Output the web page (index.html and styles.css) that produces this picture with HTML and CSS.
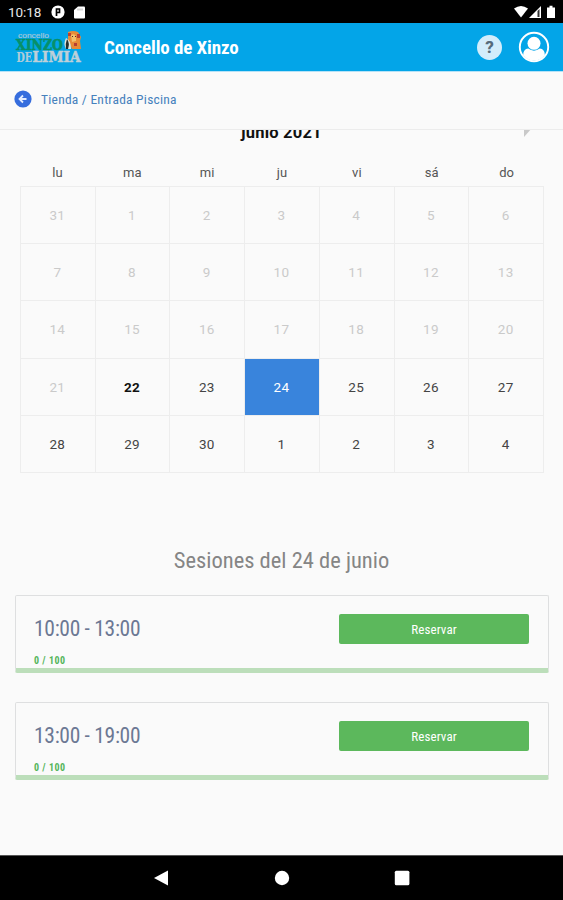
FILE: index.html
```html
<!DOCTYPE html>
<html lang="es">
<head>
<meta charset="utf-8">
<title>Concello de Xinzo</title>
<link rel="stylesheet" href="styles.css">
</head>
<body>
<div class="status">
  <span class="clock">10:18</span>
  <svg class="ic-app" width="14" height="14" viewBox="0 0 14 14"><circle cx="7" cy="7" r="6.600" fill="#fff"/><path d="M5.500 11V4h3v3.500h-3" fill="none" stroke="#000" stroke-width="1.700"/></svg>
  <svg class="ic-sd" width="11" height="13" viewBox="0 0 11 13"><path d="M4 .5h6q1 0 1 1v10q0 1-1 1H1q-1 0-1-1V4z" fill="#fff"/><path d="M4 2.500v2M6 2.500v2M8 2.500v2" stroke="#999" stroke-width=".8"/></svg>
  <span class="grow"></span>
  <svg width="44" height="14" viewBox="0 0 44 14"><path d="M1 3.500Q8-1.500 15 3.500L8 12.500z" fill="#fff"/><path d="M16 13 28 1v12z" fill="#fff"/><path d="M24.500 6v6h2V4z" fill="#333"/><path d="M34 2.500h2.500V.8h3v1.700H42V13h-8z" fill="#fff"/></svg>
</div>
<header class="header">
  <svg class="logo" width="68" height="34" viewBox="0 0 68 34">
    <text x="3" y="7" font-size="8" textLength="31" lengthAdjust="spacingAndGlyphs" fill="#a3c6d6" stroke="#a3c6d6" stroke-width=".2" font-family="Liberation Sans, sans-serif">concello</text>
    <g font-family="DejaVu Serif, serif" font-weight="bold">
      <text x="1" y="19" font-size="15" textLength="47" lengthAdjust="spacingAndGlyphs" fill="#079068" stroke="#079068" stroke-width=".6">XINZO</text>
      <text x="1.500" y="31" font-size="12" textLength="15.500" lengthAdjust="spacingAndGlyphs" fill="#b2cdd8" stroke="#b2cdd8" stroke-width=".2">DE</text>
      <text x="17.500" y="31" font-size="14.500" textLength="48" lengthAdjust="spacingAndGlyphs" fill="#bed0d8" stroke="#bed0d8" stroke-width=".5">LIMIA</text>
    </g>
    <path d="M53 1q5-2 10 0l3 5-1 4 1 8h-9l-4-8z" fill="#e88b36"/>
    <path d="M53 2h3v3h-3zM62 3h3v4h-3zM59 12h3v3h-3z" fill="#b83e32"/>
    <path d="M56 4q3-2 5 1v5l-4 1z" fill="#f3c16b"/>
    <path d="M57 5h1v1h-1zM60 5h1v1h-1z" fill="#562d28"/>
    <path d="M51 7q5 2 5 11h-5q-3-5 0-11z" fill="#e2e8de"/>
    <path d="M52 8q3 4 1 10h-2q-1-5 1-10z" fill="#26302f"/>
  </svg>
  <h1>Concello de Xinzo</h1>
  <span class="grow"></span>
  <span class="help">?</span>
  <svg class="user" width="32" height="32" viewBox="0 0 32 32"><circle cx="16" cy="16" r="14.200" fill="none" stroke="#fff" stroke-width="1.900"/><circle cx="16" cy="12.300" r="6.500" fill="#fff"/><path d="M5.200 24q0-6 5-6.500 5.800 4.300 11.600 0 5 .5 5 6.500-4 5.500-10.800 5.500T5.200 24z" fill="#fff"/></svg>
</header>
<nav class="crumbs">
  <svg width="18" height="18" viewBox="0 0 18 18"><circle cx="9" cy="9" r="8.600" fill="#366ddd"/><path d="M9 5.500 5.500 9 9 12.500M6 9h6.500" fill="none" stroke="#e4edff" stroke-width="1.800"/></svg>
  <a>Tienda / Entrada Piscina</a>
</nav>
<main class="content">
  <div class="month"><span>junio 2021</span><i class="next"></i></div>
  <div class="week"><span>lu</span><span>ma</span><span>mi</span><span>ju</span><span>vi</span><span>sá</span><span>do</span></div>
  <div class="days">
    <b class="off">31</b><b class="off">1</b><b class="off">2</b><b class="off">3</b><b class="off">4</b><b class="off">5</b><b class="off">6</b>
    <b class="off">7</b><b class="off">8</b><b class="off">9</b><b class="off">10</b><b class="off">11</b><b class="off">12</b><b class="off">13</b>
    <b class="off">14</b><b class="off">15</b><b class="off">16</b><b class="off">17</b><b class="off">18</b><b class="off">19</b><b class="off">20</b>
    <b class="off">21</b><b class="today">22</b><b>23</b><b class="selected">24</b><b>25</b><b>26</b><b>27</b>
    <b>28</b><b>29</b><b>30</b><b>1</b><b>2</b><b>3</b><b>4</b>
  </div>
  <h2>Sesiones del 24 de junio</h2>
  <section class="session">
    <div class="row"><span class="time">10:00 - 13:00</span><button>Reservar</button></div>
    <div class="count">0 / 100</div>
  </section>
  <section class="session">
    <div class="row"><span class="time">13:00 - 19:00</span><button>Reservar</button></div>
    <div class="count">0 / 100</div>
  </section>
</main>
<footer class="navbar">
  <svg width="16" height="18" viewBox="0 0 16 18"><path d="M0 9 14 1.500v15z" fill="#fff"/></svg>
  <svg width="16" height="18" viewBox="0 0 16 18"><circle cx="8" cy="9" r="7.200" fill="#fff"/></svg>
  <svg width="16" height="18" viewBox="0 0 16 18"><rect x=".8" y="1.700" width="14.600" height="14.600" rx="1.500" fill="#fff"/></svg>
</footer>
</body>
</html>
```
FILE: styles.css
```css
* { box-sizing: border-box; }
body {
  margin: 0;
  height: 900px;
  display: flex;
  flex-direction: column;
  overflow: hidden;
  background: #fafafa;
  font-family: Roboto, "Liberation Sans", sans-serif;
}
.grow { flex: 1; }
.status {
  height: 23px;
  flex: none;
  display: flex;
  align-items: center;
  padding: 1px 6px 0 8px;
  background: #000;
  color: #e8e8e8;
}
.clock { width: 43px; font-size: 13.5px; letter-spacing: -.1px; }
.ic-sd { margin-left: 9px; }
.header {
  height: 49px;
  flex: none;
  display: flex;
  align-items: center;
  padding: 0 13px 0 15px;
  background: #03a5e8;
  border-bottom: 1px solid #b5e2f7;
}
.logo { margin-top: 2px; }
h1 {
  margin: 0 0 0 21px;
  color: #fff;
  font-size: 19px;
  font-weight: 700;
  font-stretch: 75%;
  letter-spacing: -.1px;
  white-space: nowrap;
}
.help {
  width: 25px;
  height: 25px;
  margin-right: 16px;
  border-radius: 50%;
  background: #d3edfb;
  color: #566b7b;
  font-size: 17px;
  font-weight: 800;
  line-height: 25px;
  text-align: center;
}
.crumbs {
  height: 58px;
  flex: none;
  display: flex;
  align-items: center;
  gap: 9px;
  padding: 0 14px 3px;
  border-bottom: 1px solid #ececec;
}
.crumbs a { color: #4681bd; font-size: 13.5px; font-stretch: 75%; letter-spacing: .23px; }
.content { flex: 1; overflow: hidden; padding: 0 15px; }
.month {
  height: 32px;
  margin-top: -8px;
  display: flex;
  justify-content: center;
  position: relative;
  font-size: 16.5px;
  letter-spacing: .2px;
  font-weight: 700;
  line-height: 21px;
  color: #111;
}
.next {
  position: absolute;
  right: 16px;
  top: 6px;
  border-left: 8px solid #c9c9c9;
  border-bottom: 9px solid transparent;
}
.week, .days {
  width: 524px;
  margin-left: 5px;
  display: grid;
  grid-template-columns: repeat(7, 1fr);
}
.week { height: 32px; text-align: center; font-size: 13px; line-height: 37px; color: #555; }
.days {
  height: 287px;
  grid-template-rows: repeat(5, 1fr);
  border-top: 1px solid #ededed;
  border-left: 1px solid #ededed;
}
.days b {
  display: flex;
  align-items: center;
  justify-content: center;
  padding-right: 1px;
  border-right: 1px solid #ededed;
  border-bottom: 1px solid #ededed;
  color: #444;
  font-size: 13.5px;
  font-weight: 400;
  letter-spacing: .3px;
}
.days .off { color: #cacaca; }
.days .today { color: #111; font-weight: 700; }
.days .selected { background: #3984dc; background-clip: padding-box; color: #fff; }
h2 {
  margin: 73px 0 21px;
  color: #858585;
  font-size: 22.5px;
  font-weight: 400;
  font-stretch: 75%;
  line-height: 28px;
  text-align: center;
}
.session {
  height: 78px;
  margin-right: -1px;
  margin-bottom: 29px;
  padding: 18px 19px 0 18px;
  border: 1px solid #dedfe0;
  border-bottom: 5px solid #bcdeba;
  border-radius: 2px;
}
.row { display: flex; justify-content: space-between; align-items: center; height: 30px; }
.time { padding-bottom: 1px; color: #6c7894; font-size: 21.5px; letter-spacing: -.3px; font-stretch: 75%; }
.session button {
  width: 190px;
  height: 30px;
  padding: 0;
  border: 0;
  border-radius: 2px;
  background: #5cb85c;
  color: #fff;
  font: 400 13px Roboto, sans-serif;
  font-stretch: 75%;
  letter-spacing: .1px;
}
.count { margin-top: 10px; color: #54b55a; font-size: 10px; font-weight: 700; font-stretch: 75%; letter-spacing: .5px; line-height: 13px; }
.navbar {
  height: 45px;
  flex: none;
  display: flex;
  align-items: center;
  justify-content: center;
  gap: 104px;
  background: #000;
  border-top: 1px solid #555;
}
```
